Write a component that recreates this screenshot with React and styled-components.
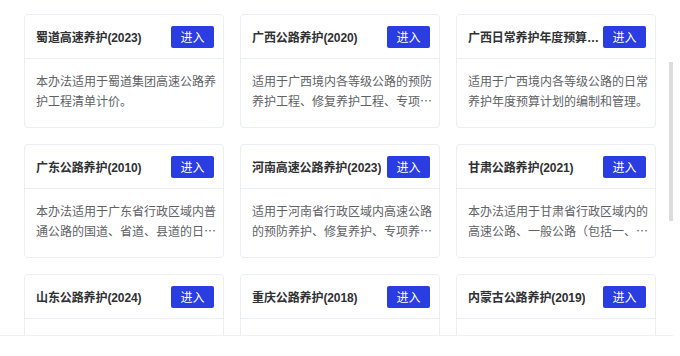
import React from 'react';
import styled, { createGlobalStyle } from 'styled-components';

const GlobalStyle = createGlobalStyle`
  body {
    margin: 0;
    background: #fff;
    font-family: "Noto Sans CJK SC", "Noto Sans", sans-serif;
  }
`;

const Frame = styled.div`
  position: relative;
  width: 673px;
`;

const Scroller = styled.div`
  height: 336px;
  overflow-y: auto;
  scrollbar-width: none;
  border-bottom: 1px solid #f0f1f4;
  box-sizing: border-box;
`;

const Thumb = styled.div`
  position: absolute;
  right: 0;
  top: 62px;
  width: 4px;
  height: 159px;
  background: #dcdcdc;
`;

const Grid = styled.div`
  display: grid;
  grid-template-columns: repeat(3, 200px);
  column-gap: 16px;
  row-gap: 16px;
  padding: 14px 0 61px 24px;
`;

const Card = styled.div`
  height: 114px;
  box-sizing: border-box;
  background: #fff;
  border: 1px solid #ebeef5;
  border-radius: 4px;
  display: flex;
  flex-direction: column;
`;

const Header = styled.div`
  height: 44px;
  flex: none;
  box-sizing: border-box;
  border-bottom: 1px solid #ebeef5;
  padding: 0 9px 0 11px;
  display: flex;
  align-items: center;
  justify-content: space-between;
  gap: 2px;
`;

const Title = styled.div`
  font-family: "Liberation Sans", "Noto Sans CJK SC", sans-serif;
  font-size: 12px;
  font-weight: 700;
  letter-spacing: -0.1px;
  color: #303133;
  white-space: nowrap;
  overflow: hidden;
  text-overflow: ellipsis;
  min-width: 0;
`;

const EnterButton = styled.button`
  flex: none;
  width: 43px;
  height: 22px;
  padding: 0;
  border: none;
  border-radius: 2px;
  background: #2a3de2;
  color: #fff;
  font-family: inherit;
  font-size: 12px;
  line-height: 22px;
  cursor: pointer;
`;

const Body = styled.div`
  margin: 12px 5px 0 11px;
  font-size: 12px;
  line-height: 20px;
  color: #606266;
  display: -webkit-box;
  -webkit-line-clamp: 2;
  -webkit-box-orient: vertical;
  overflow: hidden;
`;

const items = [
  { title: '蜀道高速养护(2023)', desc: '本办法适用于蜀道集团高速公路养护工程清单计价。' },
  { title: '广西公路养护(2020)', desc: '适用于广西境内各等级公路的预防养护工程、修复养护工程、专项养护工程和应急养护工程。' },
  { title: '广西日常养护年度预算(2020)', desc: '适用于广西境内各等级公路的日常养护年度预算计划的编制和管理。' },
  { title: '广东公路养护(2010)', desc: '本办法适用于广东省行政区域内普通公路的国道、省道、县道的日常养护和养护工程。' },
  { title: '河南高速公路养护(2023)', desc: '适用于河南省行政区域内高速公路的预防养护、修复养护、专项养护和应急养护工程。' },
  { title: '甘肃公路养护(2021)', desc: '本办法适用于甘肃省行政区域内的高速公路、一般公路（包括一、二、三、四级公路）。' },
  { title: '山东公路养护(2024)', desc: '本办法适用于山东省普通国省道公路养护工程。' },
  { title: '重庆公路养护(2018)', desc: '适用于重庆市行政区域内的公路养护工程。' },
  { title: '内蒙古公路养护(2019)', desc: '适用于内蒙古自治区公路养护工程的编制。' },
  { title: '湖北公路养护(2022)', desc: '适用于湖北省行政区域内普通公路养护工程。' },
  { title: '四川公路养护(2021)', desc: '适用于四川省行政区域内公路养护工程。' },
  { title: '云南公路养护(2020)', desc: '适用于云南省行政区域内公路养护工程。' },
];

const App = () => (
  <>
    <GlobalStyle />
    <Frame>
      <Scroller>
        <Grid>
          {items.map((item) => (
            <Card key={item.title}>
              <Header>
                <Title>{item.title}</Title>
                <EnterButton>进入</EnterButton>
              </Header>
              <Body>{item.desc}</Body>
            </Card>
          ))}
        </Grid>
      </Scroller>
      <Thumb />
    </Frame>
  </>
);

export default App;
